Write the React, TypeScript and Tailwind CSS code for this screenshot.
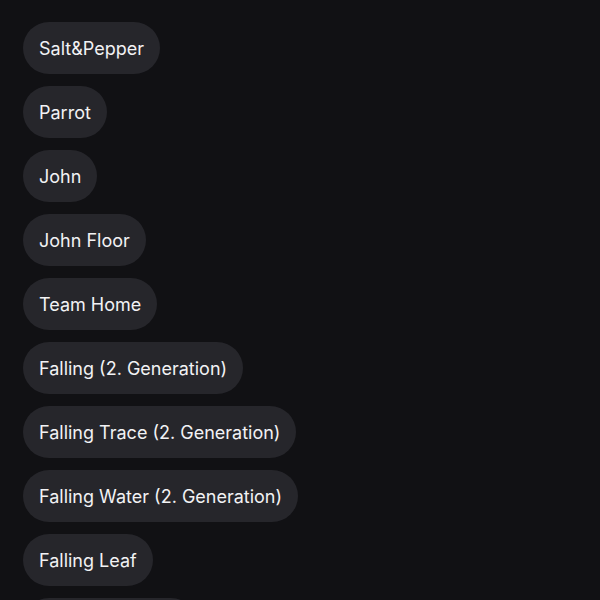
import React from "react";

const items = [
  "Salt&Pepper",
  "Parrot",
  "John",
  "John Floor",
  "Team Home",
  "Falling (2. Generation)",
  "Falling Trace (2. Generation)",
  "Falling Water (2. Generation)",
  "Falling Leaf",
];

export default function App() {
  return (
    <div
      className="w-[600px] h-[600px] overflow-hidden bg-[#111114] px-[23px] pt-[22px]"
      style={{ fontFamily: "Inter, 'Noto Sans', sans-serif" }}
    >
      <div className="flex flex-col items-start gap-[12px]">
        {items.map((t) => (
          <div
            key={t}
            className="h-[52px] flex items-center px-[16px] rounded-full bg-[#26262b] text-[18px] text-[#f2f2f4] whitespace-nowrap"
          >
            {t}
          </div>
        ))}
        <div className="h-[52px] w-[174px] rounded-full bg-[#26262b]" />
      </div>
    </div>
  );
}
